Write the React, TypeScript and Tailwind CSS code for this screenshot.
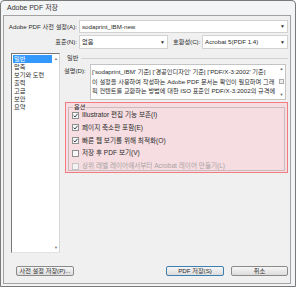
import React from "react";

function Check({ checked, disabled }: { checked?: boolean; disabled?: boolean }) {
  return (
    <div
      className={
        "w-[7px] h-[7px] border flex items-center justify-center shrink-0 " +
        (disabled ? "border-[#c4c4c4] bg-[#f4f4f4]" : "border-[#8e8f8f] bg-[#f7f7f7]")
      }
    >
      {checked && (
        <svg width="5" height="5" viewBox="0 0 5 5">
          <path d="M0.6 2.6 L2 4 L4.5 0.8" fill="none" stroke="#3b4656" strokeWidth="1" />
        </svg>
      )}
    </div>
  );
}

function Drop({ w, text }: { w: string; text: string }) {
  return (
    <div className={w + " h-full bg-white border border-[#d2d2d2] flex items-center pl-[2px] pr-[2px]"}>
      <span className="flex-1 whitespace-nowrap overflow-hidden">{text}</span>
      <span className="text-[5px] leading-none text-[#333]">▼</span>
    </div>
  );
}

function Btn({ w, text, primary }: { w: string; text: string; primary?: boolean }) {
  return (
    <div
      className={
        w +
        " h-[10px] rounded-[2px] border flex items-center justify-center bg-gradient-to-b from-[#f6f6f6] to-[#dcdcdc] " +
        (primary ? "border-[#3c7fb1]" : "border-[#8a8a8a]")
      }
    >
      {text}
    </div>
  );
}

export default function App() {
  const items = ["일반", "압축", "보기와 도련", "출력", "고급", "보안", "요약"];
  const opts: { t: string; c?: boolean; d?: boolean }[] = [
    { t: "Illustrator 편집 기능 보존(I)", c: true },
    { t: "페이지 축소판 포함(E)", c: true },
    { t: "빠른 웹 보기를 위해 최적화(O)", c: true },
    { t: "저장 후 PDF 보기(V)" },
    { t: "상위 레벨 레이어에서부터 Acrobat 레이어 만들기(L)", d: true },
  ];
  return (
    <div className="w-[300px] h-[288px] bg-white font-['Liberation_Sans','Noto_Sans_CJK_KR',sans-serif] text-[6.2px] leading-[8px] text-[#2a2a2a]">
      <div className="w-[296px] h-[287px] flex flex-col border border-[#7a7a7a] rounded-t-[4px] bg-[#f3f4f5]">
        <div className="h-[14px] pl-[6px] flex items-center text-[7px] text-[#333]">Adobe PDF 저장</div>
        <div className="ml-[2px] mr-[4px] mb-[2px] flex-1 border border-[#a2a2a2] bg-[#f0f0f0] flex flex-col">
          {/* row 1 */}
          <div className="mt-[4px] h-[13px] flex items-center">
            <div className="w-[74px] text-right pr-[1px]">Adobe PDF 사전 설정(A):</div>
            <div className="ml-[1px] h-full flex">
              <Drop w="w-[209px]" text="sodaprint_IBM-new" />
            </div>
          </div>
          {/* row 2 */}
          <div className="mt-[2px] h-[14px] flex items-center">
            <div className="w-[74px] text-right pr-[1px]">표준(N):</div>
            <div className="ml-[1px] h-full flex">
              <Drop w="w-[89px]" text="없음" />
            </div>
            <div className="ml-[5px] w-[27px] whitespace-nowrap">호환성(C):</div>
            <div className="ml-[2px] h-full flex">
              <Drop w="w-[86px]" text="Acrobat 5(PDF 1.4)" />
            </div>
          </div>
          {/* main */}
          <div className="mt-[4px] h-[200px] flex">
            <div className="ml-[7px] w-[49px] h-full relative bg-white border-l border-t border-[#777] border-r-[#d6d6d6] border-b-[#e2e2e2] border-r border-b">
              <div className="pt-[1px] pl-[1px] flex flex-col">
                {items.map((it, i) => (
                  <div
                    key={it}
                    className={
                      "h-[8px] pl-[1px] w-[39px] whitespace-nowrap " + (i === 0 ? "bg-[#3399ff] text-white" : "")
                    }
                  >
                    {it}
                  </div>
                ))}
              </div>
              <span className="absolute right-[1px] top-[3px] text-[4px] leading-none text-[#777]">▲</span>
              <span className="absolute right-[1px] bottom-[2px] text-[4px] leading-none text-[#777]">▼</span>
            </div>
            <div className="flex-1 flex flex-col">
              <div className="mt-[1px] h-[8px] pl-[7px] flex items-center">
                <span>일반</span>
                <div className="flex-1 h-px bg-[#d3d3d3] ml-[3px] mr-[2px]"></div>
              </div>
              <div className="mt-[2px] flex">
                <div className="w-[30px] pl-[4px] pt-[3px] whitespace-nowrap">설명(D):</div>
                <div className="w-[196px] h-[36px] bg-white border border-[#c4c4c4] flex">
                  <div className="flex-1 pl-[1px] pt-[2px] leading-[9.5px] overflow-hidden whitespace-nowrap">
                    <div>['sodaprint_IBM' 기준] ['경공인디자인' 기준] ['PDF/X-3:2002' 기준]</div>
                    <div>이 설정을 사용하여 작성하는 Adobe PDF 문서는 확인이 필요하며 그래</div>
                    <div>픽 컨텐트를 교환하는 방법에 대한 ISO 표준인 PDF/X-3:2002의 규격에</div>
                  </div>
                  <div className="w-[7px] flex flex-col items-center justify-between py-[2px] text-[4px] leading-none text-[#666]">
                    <span>▲</span>
                    <div className="w-[5px] h-[5px] border border-[#aaa] bg-[#eee] mt-[8px]"></div>
                    <span className="flex-1"></span>
                    <span>▼</span>
                  </div>
                </div>
              </div>
              <div className="mt-[2px] ml-[5px] w-[223px] h-[71px] border border-[#f07c80] bg-[#f6dde1] flex">
                <fieldset className="flex-1 ml-[2px] mr-[2px] mb-[1px] border border-[#c9babd] pl-[3px]">
                  <legend className="ml-[1px] px-[1px] leading-[8px]">옵션</legend>
                  <div className="flex flex-col gap-[4.75px] text-[6.6px]">
                    {opts.map((o) => (
                      <div key={o.t} className={"h-[8px] flex items-center gap-[3px] whitespace-nowrap " + (o.d ? "text-[#a9a2a4]" : "")}>
                        <Check checked={o.c} disabled={o.d} />
                        <span>{o.t}</span>
                      </div>
                    ))}
                  </div>
                </fieldset>
              </div>
            </div>
          </div>
          {/* buttons */}
          <div className="mt-[13px] flex items-center">
            <div className="ml-[12px]">
              <Btn w="w-[58px]" text="사전 설정 저장(P)..." />
            </div>
            <div className="flex-1"></div>
            <div className="flex gap-[7px] mr-[2px]">
              <Btn w="w-[58px]" text="PDF 저장(S)" primary />
              <Btn w="w-[57px]" text="취소" />
            </div>
          </div>
        </div>
      </div>
    </div>
  );
}
